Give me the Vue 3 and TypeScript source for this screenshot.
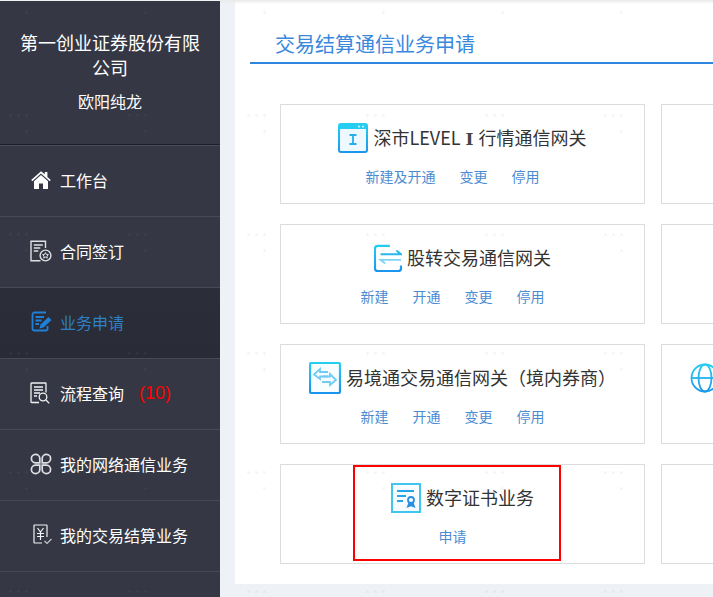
<script setup lang="ts">
interface NavItem { key: string; label: string; badge?: string; active?: boolean }
interface Card { icon: string; title: string; roman?: string; tail?: string; links: string[] }

const navItems: NavItem[] = [
  { key: 'home', label: '工作台' },
  { key: 'sign', label: '合同签订' },
  { key: 'apply', label: '业务申请', active: true },
  { key: 'query', label: '流程查询', badge: '(10)' },
  { key: 'net', label: '我的网络通信业务' },
  { key: 'trade', label: '我的交易结算业务' },
]

const rows: Card[] = [
  { icon: 'level', title: '深市LEVEL', roman: 'Ⅰ', tail: '行情通信网关', links: ['新建及开通', '变更', '停用'] },
  { icon: 'swap', title: '股转交易通信网关', links: ['新建', '开通', '变更', '停用'] },
  { icon: 'yjt', title: '易境通交易通信网关（境内券商）', links: ['新建', '开通', '变更', '停用'] },
  { icon: 'cert', title: '数字证书业务', links: ['申请'] },
]
</script>

<template>
  <div class="page">
    <svg class="defs" width="0" height="0" aria-hidden="true">
      <defs>
        <linearGradient id="blueGrad" gradientUnits="userSpaceOnUse" x1="0" y1="0" x2="0" y2="30">
          <stop offset="0" stop-color="#27d0ef" />
          <stop offset="1" stop-color="#1b94ee" />
        </linearGradient>
      </defs>
    </svg>

    <aside class="sidebar">
      <header class="profile">
        <div class="company">第一创业证券股份有限公司</div>
        <div class="person">欧阳纯龙</div>
      </header>
      <nav class="nav">
        <a v-for="item in navItems" :key="item.key" class="nav-item" :class="{ active: item.active }">
          <span class="nav-icon">
            <svg v-if="item.key === 'home'" width="22" height="22" viewBox="0 0 22 22">
              <path d="M11 2.2 1.2 11l1.1 1.3L11 4.6l8.7 7.7 1.1-1.3-3.4-3V3h-2.6v2.2z" fill="#fff" />
              <path d="M11 6 4 12.2V20h5v-5.4h4V20h5v-7.8z" fill="#fff" />
            </svg>
            <svg v-else-if="item.key === 'sign'" width="22" height="22" viewBox="0 0 22 22" fill="none" stroke="#dfe0e4" stroke-width="1.4">
              <path d="M15.5 8V1.2H1v19.6h9.5" />
              <path d="M3.8 5h9M3.8 8h6.5M3.8 11h4.5" />
              <circle cx="15.5" cy="15.5" r="5.4" />
              <path d="m15.5 12.6.9 1.9 2 .2-1.5 1.4.4 2-1.8-1-1.8 1 .4-2-1.5-1.4 2-.2z" stroke-width="1" />
            </svg>
            <svg v-else-if="item.key === 'apply'" width="22" height="22" viewBox="0 0 22 22" fill="none" stroke="#1f80d8" stroke-width="1.8">
              <path d="M16 1.5H4.5a2 2 0 0 0-2 2v14a2 2 0 0 0 2 2H16a2 2 0 0 0 1.5-1V15" />
              <path d="M5.5 6h8.5M5.5 9.5h6M5.5 13h3.5" />
              <path d="m9.5 17.5 1-4 8-7.5 3 3-8 7.5z" fill="#1f80d8" stroke="none" />
            </svg>
            <svg v-else-if="item.key === 'query'" width="22" height="22" viewBox="0 0 22 22" fill="none" stroke="#f0f1f3" stroke-width="1.3">
              <path d="M9 20.5H1.5a.5.5 0 0 1-.5-.5V1.5a.5.5 0 0 1 .5-.5h14a.5.5 0 0 1 .5.5v9" />
              <path d="M4 5h9M4 8h9M4 11h6M4 14h3" />
              <circle cx="13" cy="15" r="3.8" />
              <path d="m16 18 3.2 3.4" />
            </svg>
            <svg v-else-if="item.key === 'net'" width="22" height="22" viewBox="0 0 22 22" fill="none" stroke="#dfe0e3" stroke-width="1.7">
              <path d="M9.8 9.8H5.4a4.2 4.2 0 1 1 4.4-4.4zM12.2 9.8V5.4a4.2 4.2 0 1 1 4.4 4.4zM9.8 12.2v4.4a4.2 4.2 0 1 1-4.4-4.4zM12.2 12.2h4.4a4.2 4.2 0 1 1-4.4 4.4z" />
            </svg>
            <svg v-else width="22" height="22" viewBox="0 0 22 22" fill="none" stroke="#f0f1f3" stroke-width="1.2">
              <path d="M12 19H4.5a.5.5 0 0 1-.5-.5V1.5a.5.5 0 0 1 .5-.5h12a.5.5 0 0 1 .5.5V13" />
              <path d="m7.5 4 3 4 3-4M10.5 8v8M7 9.5h7M7 12.5h7" />
              <path d="m14.5 17 2.5 2.5 4.5-4.5" stroke="#c6c8cd" />
            </svg>
          </span>
          <span class="nav-label">{{ item.label }}</span>
          <span v-if="item.badge" class="nav-badge">{{ item.badge }}</span>
        </a>
      </nav>
    </aside>

    <main class="main">
      <div class="top-shade"></div>
      <section class="panel">
        <h1 class="panel-title">交易结算通信业务申请</h1>
        <div class="grid">
          <template v-for="(row, i) in rows" :key="row.icon">
            <article class="card">
              <div class="card-head">
                <svg v-if="row.icon === 'level'" class="card-icon" width="30" height="30" viewBox="0 0 30 30">
                  <rect x="1" y="1" width="28" height="28" rx="2" fill="#edf9fe" stroke="url(#blueGrad)" stroke-width="2" />
                  <path d="M1 2.5a2 2 0 0 1 2-2h24a2 2 0 0 1 2 2V6H1z" fill="#27cdf0" />
                  <circle cx="21" cy="3.6" r="1.1" fill="#c5f0fb" /><circle cx="25" cy="3.6" r="1.1" fill="#c5f0fb" />
                  <path d="M11.5 12h7M15 12v9M11.5 21h7" fill="none" stroke="#24aeee" stroke-width="1.8" />
                </svg>
                <svg v-else-if="row.icon === 'swap'" class="card-icon" width="28" height="28" viewBox="0 0 30 30" fill="none">
                  <path d="M17 2H4a3 3 0 0 0-3 3v21a3 3 0 0 0 3 3h22a3 3 0 0 0 3-3v-3" stroke="url(#blueGrad)" stroke-width="2.4" />
                  <path d="M7 11h22l-5-4" stroke="#28b8ee" stroke-width="2" />
                  <path d="M29 17H7l5 4" stroke="#7fd3f3" stroke-width="2" />
                </svg>
                <svg v-else-if="row.icon === 'yjt'" class="card-icon" width="32" height="32" viewBox="0 0 32 32" fill="none">
                  <rect x="1" y="1" width="30" height="30" rx="1.5" fill="#f8fdff" stroke="url(#blueGrad)" stroke-width="2.2" />
                  <path d="M19 10h-8V7l-6 5.5 6 4.5v-2.5h8" stroke="#6fcdf5" stroke-width="1.8" />
                  <path d="M14 14.5h7V12l6 6-6 5v-3h-8" stroke="#6fcdf5" stroke-width="1.8" />
                </svg>
                <svg v-else class="card-icon" width="30" height="30" viewBox="0 0 30 30" fill="none">
                  <rect x="1" y="1" width="28" height="28" fill="#f6fcff" stroke="#3fc6f0" stroke-width="2" />
                  <path d="M6 8h17M6 13h9M6 18h6" stroke="#23a6ec" stroke-width="2.2" />
                  <circle cx="20" cy="17" r="3" stroke="#2b8fe0" stroke-width="1.8" />
                  <path d="m17.5 19.5-2 5.5 4.5-1.8 4.5 1.8-2-5.5z" fill="#2b8fe0" />
                </svg>
                <span class="card-title">{{ row.title }}<span v-if="row.roman" class="roman">{{ row.roman }}</span>{{ row.tail }}</span>
              </div>
              <div class="card-links">
                <a v-for="link in row.links" :key="link" class="card-link">{{ link }}</a>
              </div>
            </article>
            <article class="card">
              <div v-if="i === 2" class="card-head card-head-start">
                <svg class="card-icon" width="30" height="30" viewBox="0 0 30 30" fill="none" stroke="url(#blueGrad)" stroke-width="1.8">
                  <circle cx="15" cy="15" r="13.5" />
                  <ellipse cx="15" cy="15" rx="6.5" ry="13.5" />
                  <path d="M1.5 15h27" />
                </svg>
              </div>
            </article>
          </template>
        </div>
        <div class="focus-box"></div>
      </section>
    </main>

    <div class="dots"></div>
  </div>
</template>

<style>
html, body { margin: 0; padding: 0; overflow: hidden; }
</style>

<style scoped>
.page {
  position: relative;
  display: flex;
  width: 713px;
  height: 597px;
  overflow: hidden;
  font-family: "Noto Sans CJK SC", "Liberation Sans", sans-serif;
}
.defs { position: absolute; }
.sidebar {
  flex: 0 0 220px;
  background: #353844;
  color: #fff;
  border-top: 1px solid #f1f2f4;
  box-sizing: border-box;
}
.profile {
  height: 144px;
  box-sizing: border-box;
  padding: 29px 20px 0;
  text-align: center;
  border-bottom: 1px solid #1d1f27;
}
.company { font-size: 18px; line-height: 25px; }
.person { font-size: 16px; line-height: 24px; margin-top: 9px; }
.nav-item {
  display: flex;
  align-items: center;
  height: 71px;
  box-sizing: border-box;
  padding: 0 0 2px 30px;
  border-bottom: 1px solid #474a58;
  color: #fff;
  font-size: 16px;
}
.nav-item:first-child { border-top: 1px solid #474a58; height: 72px; }
.nav-item.active { background: linear-gradient(#2b2d38, #292b36); color: #2f7fc4; }
.nav-icon { display: flex; width: 30px; flex: none; }
.nav-label { line-height: 22px; }
.nav-badge {
  margin-left: 15px;
  color: #f00;
  font-family: "Liberation Sans", sans-serif;
  font-size: 18px;
  line-height: 22px;
}
.main {
  flex: 1;
  min-width: 0;
  background: #eef2f6;
  display: flex;
  flex-direction: column;
  height: 584px;
  padding-left: 15px;
  box-shadow: 0 13px 0 #eef2f6;
  position: relative;
}
.top-shade {
  position: absolute;
  left: 0;
  right: 0;
  top: 0;
  height: 4px;
  background: linear-gradient(#e9e9e9, rgba(240, 240, 240, 0));
  z-index: 1;
}
.panel {
  position: relative;
  flex: 1;
  background: #fff;
  overflow: hidden;
}
.panel-title {
  margin: 0 0 0 15px;
  height: 64px;
  box-sizing: border-box;
  padding: 29px 0 0 25px;
  border-bottom: 2px solid #2e86de;
  color: #3a88dc;
  font-size: 20px;
  font-weight: 400;
  line-height: 29px;
}
.grid {
  display: grid;
  grid-template-columns: 365px 365px;
  grid-auto-rows: 100px;
  gap: 20px 16px;
  margin: 40px 0 0 45px;
}
.card {
  border: 1px solid #dcdcdc;
  box-sizing: border-box;
  padding-top: 18px;
}
.card-head {
  display: flex;
  align-items: center;
  justify-content: center;
  gap: 5px;
  height: 30px;
}
.card-head-start { justify-content: flex-start; padding-left: 28px; }
.card-icon { flex: none; }
.card-title {
  color: #333;
  font-size: 18px;
  line-height: 28px;
  padding-bottom: 2px;
  white-space: nowrap;
}
.roman {
  display: inline-block;
  width: 8px;
  margin: 0 5px;
  text-align: center;
  font-family: "DejaVu Serif", serif;
  font-size: 17px;
  line-height: 0;
  font-weight: 700;
  color: #444;
}
.card-links {
  display: flex;
  justify-content: center;
  gap: 4px;
  margin-top: 13px;
  line-height: 20px;
}
.card-link {
  margin-right: 20px;
  color: #4a8bd2;
  font-size: 14px;
}
.focus-box {
  position: absolute;
  left: 118px;
  top: 465px;
  width: 208px;
  height: 96px;
  box-sizing: border-box;
  border: 2px solid #f00;
}
.dots {
  position: absolute;
  inset: 0;
  pointer-events: none;
  background-image:
    radial-gradient(circle at 1.5px 1.5px, rgba(140, 140, 150, .09) 1.2px, transparent 1.5px),
    radial-gradient(circle at 1.5px 1.5px, rgba(140, 140, 150, .09) 1.2px, transparent 1.5px),
    radial-gradient(circle at 1.5px 1.5px, rgba(140, 140, 150, .09) 1.2px, transparent 1.5px),
    radial-gradient(circle at 1.5px 1.5px, rgba(140, 140, 150, .09) 1.2px, transparent 1.5px);
  background-size: 119px 119px;
  background-position: 25px 11px, 9px 114px, 17px 114px, 25px 114px;
  background-repeat: repeat;
}
</style>
